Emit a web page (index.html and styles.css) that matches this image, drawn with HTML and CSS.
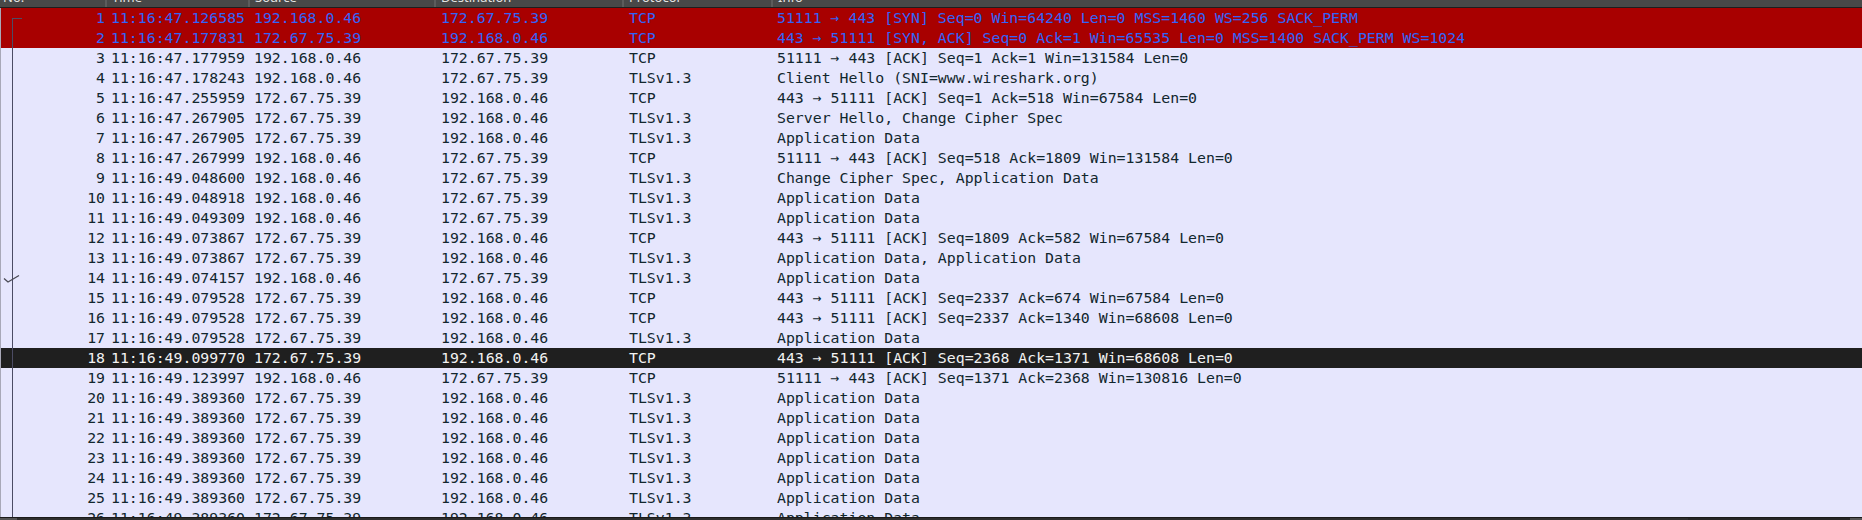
FILE: index.html
```html
<!DOCTYPE html>
<html>
<head>
<meta charset="utf-8">
<link rel="stylesheet" href="styles.css">
</head>
<body>
<div class="pane">
  <div class="head">
    <div class="hc no"><span>No.</span></div>
    <div class="hc"><span>Time</span></div>
    <div class="hc"><span>Source</span></div>
    <div class="hc"><span>Destination</span></div>
    <div class="hc"><span>Protocol</span></div>
    <div class="hc last"><span>Info</span></div>
  </div>
  <div class="list">
    <div class="related-line"></div>
    <svg class="check" width="22" height="20" viewBox="0 0 22 20"><path d="M4 10.5 L8 14 L19 7.5" fill="none" stroke="#4a4a55" stroke-width="1.3"/></svg>
    <div class="row bad"><div class="c num">1</div><div class="c">11:16:47.126585</div><div class="c">192.168.0.46</div><div class="c">172.67.75.39</div><div class="c">TCP</div><div class="c">51111 → 443 [SYN] Seq=0 Win=64240 Len=0 MSS=1460 WS=256 SACK_PERM</div></div>
    <div class="row bad"><div class="c num">2</div><div class="c">11:16:47.177831</div><div class="c">172.67.75.39</div><div class="c">192.168.0.46</div><div class="c">TCP</div><div class="c">443 → 51111 [SYN, ACK] Seq=0 Ack=1 Win=65535 Len=0 MSS=1400 SACK_PERM WS=1024</div></div>
    <div class="row"><div class="c num">3</div><div class="c">11:16:47.177959</div><div class="c">192.168.0.46</div><div class="c">172.67.75.39</div><div class="c">TCP</div><div class="c">51111 → 443 [ACK] Seq=1 Ack=1 Win=131584 Len=0</div></div>
    <div class="row"><div class="c num">4</div><div class="c">11:16:47.178243</div><div class="c">192.168.0.46</div><div class="c">172.67.75.39</div><div class="c">TLSv1.3</div><div class="c">Client Hello (SNI=www.wireshark.org)</div></div>
    <div class="row"><div class="c num">5</div><div class="c">11:16:47.255959</div><div class="c">172.67.75.39</div><div class="c">192.168.0.46</div><div class="c">TCP</div><div class="c">443 → 51111 [ACK] Seq=1 Ack=518 Win=67584 Len=0</div></div>
    <div class="row"><div class="c num">6</div><div class="c">11:16:47.267905</div><div class="c">172.67.75.39</div><div class="c">192.168.0.46</div><div class="c">TLSv1.3</div><div class="c">Server Hello, Change Cipher Spec</div></div>
    <div class="row"><div class="c num">7</div><div class="c">11:16:47.267905</div><div class="c">172.67.75.39</div><div class="c">192.168.0.46</div><div class="c">TLSv1.3</div><div class="c">Application Data</div></div>
    <div class="row"><div class="c num">8</div><div class="c">11:16:47.267999</div><div class="c">192.168.0.46</div><div class="c">172.67.75.39</div><div class="c">TCP</div><div class="c">51111 → 443 [ACK] Seq=518 Ack=1809 Win=131584 Len=0</div></div>
    <div class="row"><div class="c num">9</div><div class="c">11:16:49.048600</div><div class="c">192.168.0.46</div><div class="c">172.67.75.39</div><div class="c">TLSv1.3</div><div class="c">Change Cipher Spec, Application Data</div></div>
    <div class="row"><div class="c num">10</div><div class="c">11:16:49.048918</div><div class="c">192.168.0.46</div><div class="c">172.67.75.39</div><div class="c">TLSv1.3</div><div class="c">Application Data</div></div>
    <div class="row"><div class="c num">11</div><div class="c">11:16:49.049309</div><div class="c">192.168.0.46</div><div class="c">172.67.75.39</div><div class="c">TLSv1.3</div><div class="c">Application Data</div></div>
    <div class="row"><div class="c num">12</div><div class="c">11:16:49.073867</div><div class="c">172.67.75.39</div><div class="c">192.168.0.46</div><div class="c">TCP</div><div class="c">443 → 51111 [ACK] Seq=1809 Ack=582 Win=67584 Len=0</div></div>
    <div class="row"><div class="c num">13</div><div class="c">11:16:49.073867</div><div class="c">172.67.75.39</div><div class="c">192.168.0.46</div><div class="c">TLSv1.3</div><div class="c">Application Data, Application Data</div></div>
    <div class="row"><div class="c num">14</div><div class="c">11:16:49.074157</div><div class="c">192.168.0.46</div><div class="c">172.67.75.39</div><div class="c">TLSv1.3</div><div class="c">Application Data</div></div>
    <div class="row"><div class="c num">15</div><div class="c">11:16:49.079528</div><div class="c">172.67.75.39</div><div class="c">192.168.0.46</div><div class="c">TCP</div><div class="c">443 → 51111 [ACK] Seq=2337 Ack=674 Win=67584 Len=0</div></div>
    <div class="row"><div class="c num">16</div><div class="c">11:16:49.079528</div><div class="c">172.67.75.39</div><div class="c">192.168.0.46</div><div class="c">TCP</div><div class="c">443 → 51111 [ACK] Seq=2337 Ack=1340 Win=68608 Len=0</div></div>
    <div class="row"><div class="c num">17</div><div class="c">11:16:49.079528</div><div class="c">172.67.75.39</div><div class="c">192.168.0.46</div><div class="c">TLSv1.3</div><div class="c">Application Data</div></div>
    <div class="row sel"><div class="c num">18</div><div class="c">11:16:49.099770</div><div class="c">172.67.75.39</div><div class="c">192.168.0.46</div><div class="c">TCP</div><div class="c">443 → 51111 [ACK] Seq=2368 Ack=1371 Win=68608 Len=0</div></div>
    <div class="row"><div class="c num">19</div><div class="c">11:16:49.123997</div><div class="c">192.168.0.46</div><div class="c">172.67.75.39</div><div class="c">TCP</div><div class="c">51111 → 443 [ACK] Seq=1371 Ack=2368 Win=130816 Len=0</div></div>
    <div class="row"><div class="c num">20</div><div class="c">11:16:49.389360</div><div class="c">172.67.75.39</div><div class="c">192.168.0.46</div><div class="c">TLSv1.3</div><div class="c">Application Data</div></div>
    <div class="row"><div class="c num">21</div><div class="c">11:16:49.389360</div><div class="c">172.67.75.39</div><div class="c">192.168.0.46</div><div class="c">TLSv1.3</div><div class="c">Application Data</div></div>
    <div class="row"><div class="c num">22</div><div class="c">11:16:49.389360</div><div class="c">172.67.75.39</div><div class="c">192.168.0.46</div><div class="c">TLSv1.3</div><div class="c">Application Data</div></div>
    <div class="row"><div class="c num">23</div><div class="c">11:16:49.389360</div><div class="c">172.67.75.39</div><div class="c">192.168.0.46</div><div class="c">TLSv1.3</div><div class="c">Application Data</div></div>
    <div class="row"><div class="c num">24</div><div class="c">11:16:49.389360</div><div class="c">172.67.75.39</div><div class="c">192.168.0.46</div><div class="c">TLSv1.3</div><div class="c">Application Data</div></div>
    <div class="row"><div class="c num">25</div><div class="c">11:16:49.389360</div><div class="c">172.67.75.39</div><div class="c">192.168.0.46</div><div class="c">TLSv1.3</div><div class="c">Application Data</div></div>
    <div class="row"><div class="c num">26</div><div class="c">11:16:49.389360</div><div class="c">172.67.75.39</div><div class="c">192.168.0.46</div><div class="c">TLSv1.3</div><div class="c">Application Data</div></div>
  </div>
  <div class="hscroll">
    <div class="seg a"></div>
    <div class="seg b"></div>
    <div class="seg c"></div>
    <div class="seg d"></div>
  </div>
</div>
</body>
</html>
```

FILE: styles.css
```css
html, body {
  margin: 0;
  padding: 0;
  background: #e6e6fd;
}
.pane {
  width: 1862px;
  height: 520px;
  overflow: hidden;
  display: flex;
  flex-direction: column;
  background: #e6e6fd;
}
.head {
  flex: 0 0 7px;
  height: 7px;
  display: grid;
  grid-template-columns: 107px 143px 186px 188px 149px 1fr;
  background: #484848;
  border-bottom: 1px solid #1e1e1e;
  overflow: hidden;
}
.hc {
  border-right: 2px solid #5c5c5c;
  overflow: hidden;
  padding-left: 5px;
  font-family: "Noto Sans", "DejaVu Sans", sans-serif;
  font-size: 13px;
  color: #e4e4e4;
}
.hc.no { padding-left: 3px; }
.hc.last { border-right: none; }
.hc span {
  display: block;
  line-height: 16px;
  margin-top: -11px;
}
.list {
  flex: 1 1 auto;
  position: relative;
  overflow: hidden;
  border-left: 1px solid #a8a8b8;
}
.row {
  display: grid;
  grid-template-columns: 105px 143px 187px 188px 148px 1fr;
  height: 20px;
  box-sizing: border-box;
  padding-top: 1px;
  line-height: 19px;
  font-family: "DejaVu Sans Mono", "Liberation Mono", monospace;
  font-size: 14.85px;
  color: #12272e;
  background: #e6e6fd;
  white-space: pre;
}
.c {
  padding-left: 5px;
  overflow: hidden;
}
.c.num {
  text-align: right;
  padding-left: 0;
  padding-right: 1px;
}
.row.bad {
  background: #a80000;
  color: #3264f8;
}
.row.sel {
  background: #1f1f1f;
  color: #f2f2f2;
}
.related-line {
  position: absolute;
  left: 11px;
  top: 10px;
  bottom: 0;
  width: 9px;
  border-left: 1.5px solid #4c4c64;
  border-top: 1.5px solid #4c4c64;
  z-index: 2;
  pointer-events: none;
}
.check {
  position: absolute;
  left: -1px;
  top: 260px;
  z-index: 2;
}
.hscroll {
  flex: 0 0 3px;
  height: 3px;
  display: flex;
  background: #2b2b2b;
  border-top: 1px solid #1a1a1a;
  box-sizing: border-box;
}
.seg { height: 100%; }
.seg.a { width: 17px; background: #555; }
.seg.b { width: 1671px; background: #2e2e2e; }
.seg.c { width: 157px; background: #262626; }
.seg.d { flex: 1; background: #555; }
```
